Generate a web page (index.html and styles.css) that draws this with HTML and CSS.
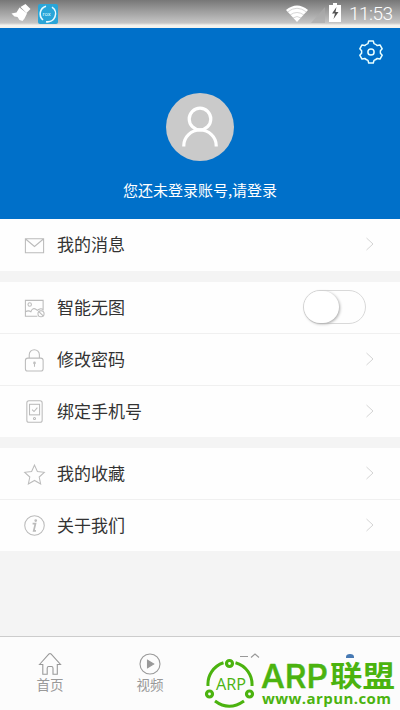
FILE: index.html
```html
<!DOCTYPE html>
<html lang="zh-CN">
<head>
<meta charset="utf-8">
<title>我的</title>
<link rel="stylesheet" href="styles.css">
</head>
<body>
<div class="screen">
  <header class="status">
    <svg class="clean" width="20" height="20" viewBox="0 0 20 20"><path d="M14.500 1l5 5-4 4-6-6zM8.500 4.500l7.500 6-2.500 5-2 2.500-3-1-2-3-3-.5-3-3 5-1z" fill="#fff"/></svg>
    <svg class="app" width="20" height="20" viewBox="0 0 20 20"><rect width="20" height="20" rx="2" fill="#29a5d8"/><path d="M8 2.200A8 8 0 0 0 5 16M8 17.700A8 8 0 0 0 14 3.200" fill="none" stroke="#e9faff" stroke-width="1.600"/><text x="4.500" y="12" class="app-name">rox</text></svg>
    <svg class="wifi" width="24" height="18" viewBox="0 0 24 18"><path d="M1 5Q12-4 23 5L12 17z" fill="#fff"/><path d="M2.500 7Q12-.5 21.500 7M5 10q7-5 14 0M8 13q4-3 8 0" fill="none" stroke="#bbb" stroke-width=".6"/></svg>
    <svg class="signal" width="14" height="17" viewBox="0 0 14 17"><path d="M14 1v16H0z" fill="#aaa" opacity=".65"/></svg>
    <svg class="battery" width="12" height="19" viewBox="0 0 12 19"><path d="M4 0h4v2h4v17H0V2h4z" fill="#fff"/><path d="M7.500 4L3 10.500h3L4.500 16 9.500 9H6.500z" fill="#555"/></svg>
    <span class="clock">11:53</span>
  </header>
  <section class="hero">
    <svg class="gear" width="24" height="24" viewBox="0 0 24 24"><path d="M9.700 1h4.600l.7 2.600q2 .7 3.300 2l2.700-.7 2.200 3.900-1.800 2v2.400l1.800 2-2.200 3.900-2.700-.7q-1.300 1.300-3.300 2l-.7 2.600H9.700L9 20.400q-2-.7-3.300-2l-2.700.7-2.200-3.900 1.800-2v-2.400l-1.800-2L3 4.900l2.700.7q1.300-1.300 3.300-2z"/><circle cx="12" cy="12" r="3.100"/></svg>
    <svg class="avatar" width="68" height="68" viewBox="0 0 68 68"><circle cx="34" cy="34" r="34" fill="#cacaca"/><g fill="none" stroke="#fff" stroke-width="3.200"><circle cx="34" cy="26" r="10.800"/><path d="M17.800 53.500v-1a16.200 15.500 0 0 1 32.400 0v1"/></g></svg>
    <p class="login">您还未登录账号,请登录</p>
  </section>
  <main>
    <section class="group">
      <div class="row"><svg class="icon" viewBox="0 0 24 24"><path d="M2.500 5h19v14.500h-19zM3 5.500l9 7.500 9-7.500"/></svg><span>我的消息</span><svg class="arrow" viewBox="0 0 8 14"><path d="M.5 1l6.500 6-6.500 6"/></svg></div>
    </section>
    <section class="group">
      <div class="row"><svg class="icon" viewBox="0 0 24 24"><path d="M15 20H2.500V3.500H21V14M2.500 15.500q3-2 6 0M8 16q1.500-5 5-3.500l2 1.500q3-3 6-1"/><circle cx="7" cy="7.800" r="1.800"/><circle cx="18.800" cy="17.500" r="3.200"/><path d="M16.500 15.300l4.600 4.500"/></svg><span>智能无图</span><i class="switch"></i></div>
      <div class="row"><svg class="icon" viewBox="0 0 24 24"><rect x="2.500" y="9.500" width="18.500" height="13.500" rx="2.500"/><path d="M6.500 9.500V6a5.300 5.300 0 0 1 10.600 0v3.500M12 15v3.500"/><circle cx="12" cy="14.500" r=".8"/></svg><span>修改密码</span><svg class="arrow" viewBox="0 0 8 14"><path d="M.5 1l6.500 6-6.500 6"/></svg></div>
      <div class="row"><svg class="icon" viewBox="0 0 24 24"><rect x="4" y=".8" width="16" height="22.400" rx="2.200"/><rect x="6.800" y="4.500" width="10.500" height="11"/><path d="M9.500 10l2 2 3.500-4"/><circle cx="12" cy="19.300" r="1.100"/></svg><span>绑定手机号</span><svg class="arrow" viewBox="0 0 8 14"><path d="M.5 1l6.500 6-6.500 6"/></svg></div>
    </section>
    <section class="group">
      <div class="row"><svg class="icon" viewBox="0 0 24 24"><path d="M12 2.200l3 6.700 7.200.8-5.300 4.900 1.500 7.200-6.400-3.600-6.400 3.600 1.500-7.200L1.800 9.700 9 8.900z"/></svg><span>我的收藏</span><svg class="arrow" viewBox="0 0 8 14"><path d="M.5 1l6.500 6-6.500 6"/></svg></div>
      <div class="row"><svg class="icon" viewBox="0 0 24 24"><circle cx="12" cy="12" r="10.200"/><path d="M10 10h3l-1.800 7.500h2.300" stroke-width="1.800"/><circle cx="13.300" cy="6.800" r=".8" stroke-width="1.300"/></svg><span>关于我们</span><svg class="arrow" viewBox="0 0 8 14"><path d="M.5 1l6.500 6-6.500 6"/></svg></div>
    </section>
  </main>
  <nav class="tabs">
    <div class="tab"><svg width="24" height="24" viewBox="0 0 24 24"><path d="M1.500 12.500L11 2q1-1 2 0l9.500 10.500h-3.200v9.700H15v-6q0-1.700-1.500-1.700h-2.800q-1.500 0-1.500 1.700v6H4.800v-9.700z"/></svg><span>首页</span></div>
    <div class="tab"><svg width="24" height="24" viewBox="0 0 24 24"><circle cx="12" cy="12" r="10"/><path d="M9.500 8.200v7.600l6.200-3.800z" fill="#999"/></svg><span>视频</span></div>
    <div class="tab"><svg width="24" height="24" viewBox="0 0 24 24"><path d="M2 4.500h8M13 5.500l4-3.500 4 3.500"/></svg></div>
    <div class="tab"><svg width="24" height="24" viewBox="0 0 24 24"><path d="M8 6V5q0-3 4-3t4 3v1z" class="person"/></svg></div>
  </nav>
  <svg class="watermark" width="200" height="60" viewBox="0 0 200 60">
    <g fill="none" stroke="#4bb30f">
      <path d="M35.500 12.800A22.500 22.500 0 0 1 52 36M23.500 12.800A22.500 22.500 0 0 0 8 36M15 51Q29 61.500 44 51" stroke-width="3"/>
      <g stroke-width="3.200"><circle cx="29.500" cy="13.500" r="3"/><circle cx="9.500" cy="44" r="3"/><circle cx="49.500" cy="44" r="3"/></g>
    </g>
    <text class="mark-small" x="16" y="40" textLength="30" lengthAdjust="spacingAndGlyphs">ARP</text>
    <text class="mark-latin" x="61" y="37.500" textLength="67" lengthAdjust="spacingAndGlyphs">ARP</text>
    <text class="mark-cjk" x="130" y="36.500" textLength="65" lengthAdjust="spacingAndGlyphs">联盟</text>
    <text class="mark-url" x="62" y="53.500" textLength="129" lengthAdjust="spacing">www.arpun.com</text>
  </svg>
</div>
</body>
</html>
```
FILE: styles.css
```css
* { box-sizing: border-box; }
body { margin: 0; font-family: "Noto Sans CJK SC", sans-serif; }
.screen {
  position: relative;
  display: flex;
  flex-direction: column;
  width: 400px;
  height: 710px;
  overflow: hidden;
  background: #f4f4f4;
}
.status {
  display: flex;
  align-items: center;
  height: 28px;
  padding: 0 7px 0 11px;
  background: linear-gradient(#777, #999 35%, #c5c5c5 82%, #f2f2ee 90%);
}
.app { margin: 0 0 0 7px; }
.clean { margin-top: -2px; }
.app-name { font: 6px "Roboto", sans-serif; fill: #d9f7ff; }
.wifi { margin-left: auto; }
.signal { margin-left: 2px; }
.battery { margin: -3px 8px 0 4px; }
.clock { color: #fff; font: 19px/28px "Roboto", sans-serif; font-weight: 300; letter-spacing: -.5px; width: 44px; white-space: nowrap; }
.hero {
  position: relative;
  display: flex;
  flex-direction: column;
  align-items: center;
  height: 191px;
  padding-top: 65px;
  background: #0070c9;
}
.gear { position: absolute; right: 17px; top: 12px; fill: none; stroke: #e9ffff; stroke-width: 1.5; stroke-linejoin: round; }
.login { margin: 18px 0 0; color: #fff; font-size: 15px; line-height: 22px; }
.group { margin-bottom: 11px; background: #fefefe; }
.row {
  display: flex;
  align-items: center;
  height: 52px;
  padding: 0 26px 1px 23px;
  color: #333;
  font-size: 17px;
  line-height: 24px;
  border-bottom: 1px solid #f0f0f0;
}
.row:last-child { border-bottom-color: transparent; }
.row:last-child:not(:first-child) { height: 51px; }
.row span { margin-top: 0; }
.icon { width: 23px; height: 23px; margin: 2px 11px 0 0; fill: none; stroke: #bbb; stroke-width: 1.1; }
.arrow { width: 8px; height: 14px; margin-left: auto; fill: none; stroke: #d4d4d4; stroke-width: 1; }
.switch { width: 63px; height: 34px; margin-left: auto; margin-right: 8px; border: 1px solid #d9d9d9; border-radius: 17px; }
.switch::before { content: ""; display: block; width: 35px; height: 32px; border-radius: 17px; box-shadow: 1px 1px 3px #aaa; background: #fff; }
.tabs { display: flex; height: 74px; margin-top: auto; border-top: 1px solid #ccc; background: #fcfcfc; }
.tab { display: flex; flex: 1; flex-direction: column; align-items: center; padding-top: 15px; color: #999; font-size: 13.5px; line-height: 17px; }
.tab svg { fill: none; stroke: #999; stroke-width: 1.1; }
.tab .person { fill: #4779b3; stroke: none; }
.watermark { position: absolute; left: 200px; top: 650px; }
.watermark text { fill: #4bb30f; }
.watermark .mark-small { font: 17px "Open Sans", sans-serif; }
.watermark .mark-latin { font: 500 33px "Inter", sans-serif; stroke: #4bb30f; stroke-width: .5; stroke-linejoin: round; }
.watermark .mark-cjk { font: 700 29px "Noto Sans CJK SC", sans-serif; }
.watermark .mark-url { font: 700 15px "Open Sans", sans-serif; }
```
